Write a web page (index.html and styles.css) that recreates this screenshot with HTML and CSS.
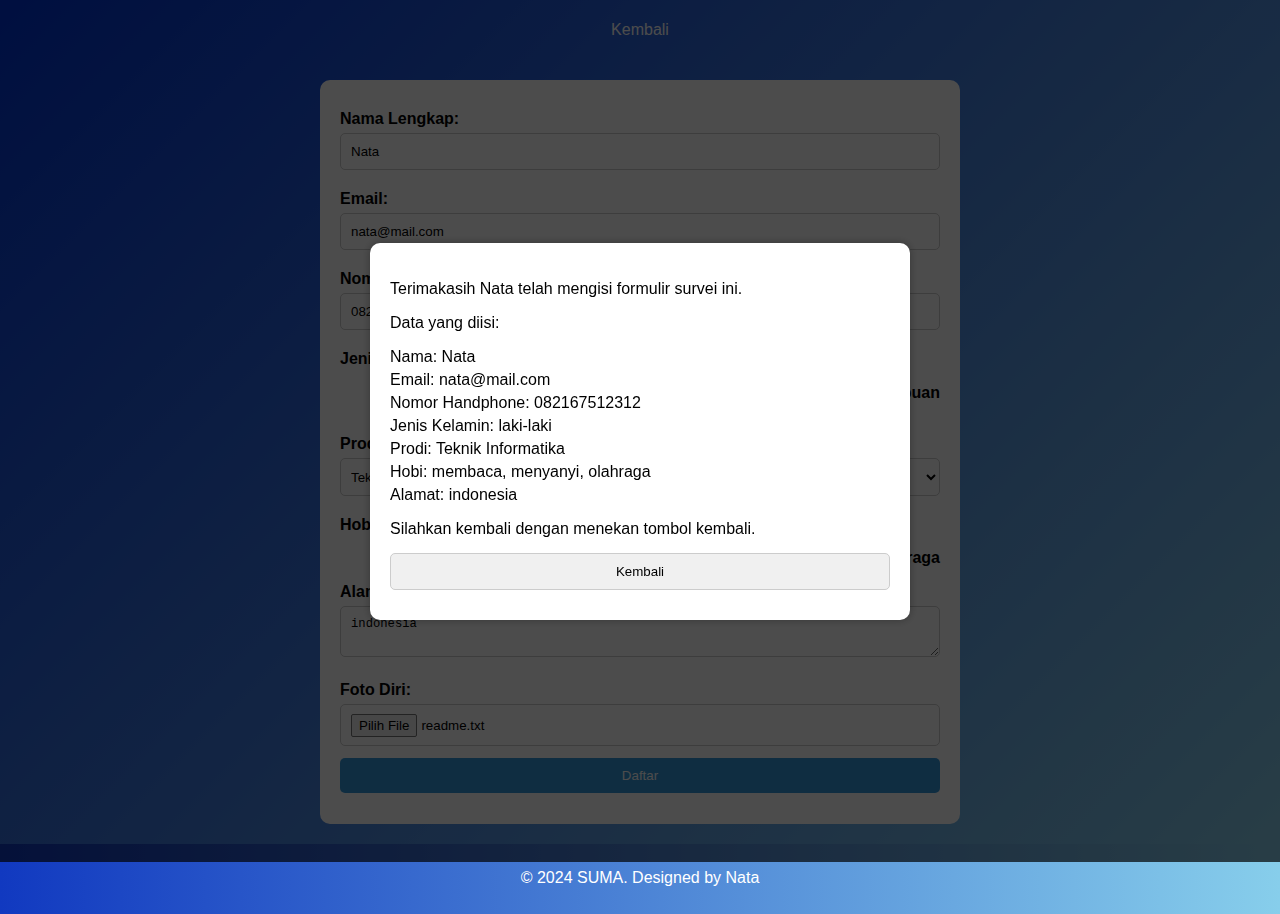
FILE: index.html
```html
<!DOCTYPE html>
<html lang="id">
<head>
<meta charset="utf-8">
<title>Formulir Survei SUMA</title>
<link rel="stylesheet" href="styles.css">
</head>
<body>
<main class="page">
  <nav class="top-nav"><a href="#" class="back-link">Kembali</a></nav>
  <form class="card">
    <div class="field">
      <label class="field-label" for="nama">Nama Lengkap:</label>
      <input class="text-input" id="nama" type="text" value="Nata">
    </div>
    <div class="field">
      <label class="field-label" for="email">Email:</label>
      <input class="text-input" id="email" type="email" value="nata@mail.com">
    </div>
    <div class="field">
      <label class="field-label" for="hp">Nomor Handphone:</label>
      <input class="text-input" id="hp" type="text" value="082167512312">
    </div>
    <div class="field field-radio">
      <span class="field-label">Jenis Kelamin:</span>
      <div class="options options-radio">
        <label class="option"><input type="radio" name="jk" checked> Laki-laki</label>
        <label class="option"><input type="radio" name="jk"> Perempuan</label>
      </div>
    </div>
    <div class="field">
      <label class="field-label" for="prodi">Prodi:</label>
      <select class="select-input" id="prodi">
        <option>Teknik Informatika</option>
        <option>Sistem Informasi</option>
      </select>
    </div>
    <div class="field field-tight">
      <span class="field-label">Hobi:</span>
      <div class="options options-check">
        <label class="option"><input type="checkbox" checked> membaca</label>
        <label class="option"><input type="checkbox" checked> menyanyi</label>
        <label class="option"><input type="checkbox" checked> olahraga</label>
      </div>
    </div>
    <div class="field field-area">
      <label class="field-label" for="alamat">Alamat:</label>
      <textarea class="area-input" id="alamat" rows="2">indonesia</textarea>
    </div>
    <div class="field field-file">
      <span class="field-label">Foto Diri:</span>
      <div class="file-box"><span class="file-btn">Pilih File</span><span class="file-name">readme.txt</span></div>
    </div>
    <button type="button" class="submit-btn">Daftar</button>
  </form>
</main>
<footer class="site-footer">© 2024 SUMA. Designed by Nata</footer>

<div class="overlay">
  <div class="modal">
    <p class="modal-p">Terimakasih Nata telah mengisi formulir survei ini.</p>
    <p class="modal-p">Data yang diisi:</p>
    <p class="data-line">Nama: Nata</p>
    <p class="data-line">Email: nata@mail.com</p>
    <p class="data-line">Nomor Handphone: 082167512312</p>
    <p class="data-line">Jenis Kelamin: laki-laki</p>
    <p class="data-line">Prodi: Teknik Informatika</p>
    <p class="data-line">Hobi: membaca, menyanyi, olahraga</p>
    <p class="data-line">Alamat: indonesia</p>
    <p class="modal-p modal-last">Silahkan kembali dengan menekan tombol kembali.</p>
    <button type="button" class="modal-btn">Kembali</button>
  </div>
</div>
</body>
</html>
```
FILE: styles.css
```css
* { box-sizing: border-box; }

html, body {
  margin: 0;
  padding: 0;
}

body {
  font-family: "Liberation Sans", Arial, sans-serif;
  font-size: 16px;
  color: #000;
  background: linear-gradient(to right, #1139c0, #87ceeb);
  min-height: 914px;
}

.page {
  background: linear-gradient(135deg, #0033d6 0%, #87ceeb 100%);
  padding: 21px 0 20px;
}

.top-nav {
  text-align: center;
  margin-bottom: 41px;
  line-height: 18px;
}

.back-link {
  color: #fff;
  text-decoration: none;
  font-size: 16px;
}

.card {
  width: 640px;
  margin: 0 auto;
  background: #fff;
  border-radius: 10px;
  padding: 30px 20px 31px;
}

.field {
  margin-bottom: 20px;
}

.field-radio { margin-bottom: 22px; }
.field-tight { margin-bottom: 6px; }
.field-area { margin-bottom: 24px; }
.field-file { margin-bottom: 12px; }

.field-label {
  display: block;
  font-weight: bold;
  font-size: 16px;
  margin-bottom: 5px;
}

.text-input,
.select-input,
.area-input {
  display: block;
  width: 100%;
  border: 1px solid #ccc;
  border-radius: 5px;
  padding: 10px;
  font-family: "Liberation Sans", Arial, sans-serif;
  font-size: 13.333px;
  color: #000;
  background: #fff;
}

.text-input { height: 37px; }
.select-input {
  height: 38px;
  padding-left: 6px;
}

.area-input {
  height: 51px;
  font-family: "Liberation Mono", "DejaVu Sans Mono", monospace;
  font-size: 12.2px;
  line-height: 15px;
  resize: vertical;
}

.options {
  display: flex;
  justify-content: flex-end;
  align-items: center;
  gap: 24px;
}

.options-radio { height: 40px; }
.options-check { height: 38px; }

.option {
  font-weight: bold;
  font-size: 16px;
  display: flex;
  align-items: center;
  gap: 4px;
}

.option input { margin: 0; }

.file-box {
  height: 42px;
  border: 1px solid #ccc;
  border-radius: 5px;
  padding: 0 10px;
  display: flex;
  align-items: center;
  gap: 4px;
  font-size: 13.333px;
}

.file-btn {
  border: 1px solid #767676;
  border-radius: 2px;
  background: #efefef;
  padding: 3px 7px;
  line-height: 15px;
}

.submit-btn {
  display: block;
  width: 100%;
  height: 35px;
  border: none;
  border-radius: 5px;
  background: #3498db;
  color: #fff;
  font-family: "Liberation Sans", Arial, sans-serif;
  font-size: 13.333px;
}

.site-footer {
  position: relative;
  z-index: 20;
  margin-top: 18px;
  padding: 7px 0 30px;
  text-align: center;
  color: #fff;
  line-height: 18px;
  background: linear-gradient(to right, #1139c0, #87ceeb);
}

.overlay {
  position: fixed;
  inset: 0;
  z-index: 10;
  background: rgba(0, 0, 0, 0.7);
}

.modal {
  width: 540px;
  margin: 243px auto 0;
  background: #fff;
  border-radius: 10px;
  padding: 21px 20px 30px;
  line-height: 18px;
  box-shadow: 0 0 10px rgba(0, 0, 0, 0.3);
}

.modal-p {
  margin: 16px 0;
}

.data-line {
  margin: 5px 0;
}

.modal-p + .data-line { margin-top: 16px; }
.data-line + .modal-p { margin-top: 16px; }
.modal-last { margin-bottom: 15px; }

.modal-btn {
  display: block;
  width: 100%;
  height: 37px;
  border: 1px solid #ccc;
  border-radius: 5px;
  background: #f0f0f0;
  font-family: "Liberation Sans", Arial, sans-serif;
  font-size: 13.333px;
  color: #000;
}
```
